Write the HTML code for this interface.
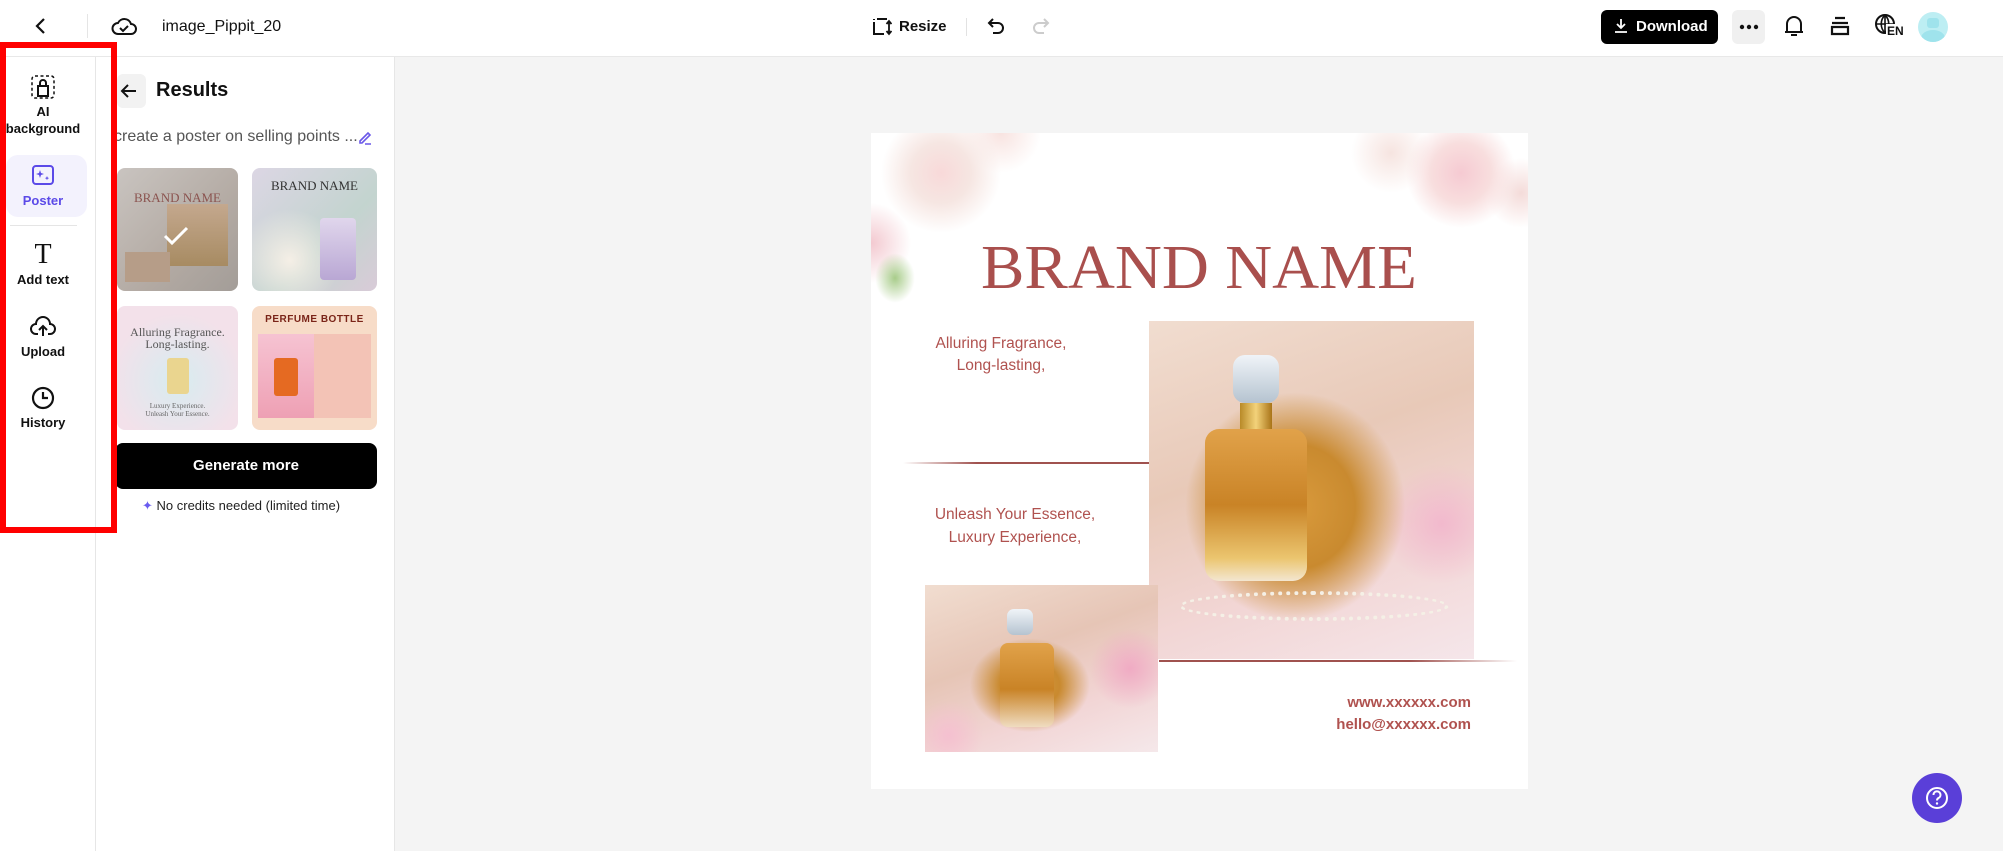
<!DOCTYPE html>
<html><head><meta charset="utf-8"><style>
*{box-sizing:border-box;margin:0;padding:0}
body{width:2003px;height:851px;overflow:hidden;background:#f4f4f4;font-family:"Liberation Sans",sans-serif;position:relative;color:#111}
.abs{position:absolute}
.top{left:0;top:0;width:2003px;height:57px;background:#fff;border-bottom:1px solid #e8e8e8}
.nav{left:0;top:57px;width:96px;height:794px;background:#fff;border-right:1px solid #e6e6e6}
.panel{left:96px;top:57px;width:299px;height:794px;background:#fff;border-right:1px solid #e6e6e6}
.lbl{font-size:13px;font-weight:bold;text-align:center;width:86px;left:0;line-height:17px}
.thumb{border-radius:8px;overflow:hidden}
.serif{font-family:"Liberation Serif",serif}
.pt{color:#b0524f;font-size:15.5px;font-family:"Liberation Sans",sans-serif;white-space:nowrap}
</style></head><body>
<div class="abs top"></div>
<svg class="abs" style="left:33px;top:17px" width="16" height="18" viewBox="0 0 16 18"><path d="M11 2 L4 9 L11 16" fill="none" stroke="#111" stroke-width="2.2"/></svg>
<div class="abs" style="left:87px;top:14px;width:1px;height:24px;background:#e5e5e5"></div>
<svg class="abs" style="left:111px;top:15px" width="26" height="22" viewBox="0 0 26 22"><path d="M7 19 H20 a5 5 0 0 0 0-10 a7 7 0 0 0-13-1 a5.5 5.5 0 0 0 0 11z" fill="none" stroke="#111" stroke-width="2"/><path d="M9 13 l3 3 l5-5" fill="none" stroke="#111" stroke-width="2"/></svg>
<div class="abs" style="left:162px;top:18px;font-size:16px">image_Pippit_20</div>
<svg class="abs" style="left:872px;top:17px" width="20" height="20" viewBox="0 0 20 20"><path d="M2 5v12h10M5 2h10M2 2v1M15 5" fill="none" stroke="#111" stroke-width="2"/><path d="M17 4v13M14.5 7l2.5-3 2.5 3M14.5 14l2.5 3 2.5-3" fill="none" stroke="#111" stroke-width="1.8"/></svg>
<div class="abs" style="left:899px;top:18px;font-size:15px;font-weight:bold">Resize</div>
<div class="abs" style="left:966px;top:18px;width:1px;height:18px;background:#e2e2e2"></div>
<svg class="abs" style="left:987px;top:17px" width="20" height="20" viewBox="0 0 20 20"><path d="M6 2 L2 6 L6 10 M2 6 H11 a5 5 0 0 1 0 10 H6" fill="none" stroke="#111" stroke-width="2"/></svg>
<svg class="abs" style="left:1030px;top:17px" width="20" height="20" viewBox="0 0 20 20"><path d="M14 2 L18 6 L14 10 M18 6 H9 a5 5 0 0 0 0 10 H14" fill="none" stroke="#ccc" stroke-width="2"/></svg>
<div class="abs" style="left:1601px;top:10px;width:117px;height:34px;background:#000;border-radius:6px;color:#fff;font-size:15px;font-weight:bold;line-height:34px;padding-left:35px">Download</div>
<svg class="abs" style="left:1614px;top:18px" width="14" height="16" viewBox="0 0 14 16"><path d="M7 1v9M3 6l4 4 4-4M1 14h12" fill="none" stroke="#fff" stroke-width="1.8"/></svg>
<div class="abs" style="left:1732px;top:10px;width:33px;height:34px;background:#f0f0f0;border-radius:6px"></div>
<svg class="abs" style="left:1738px;top:24px" width="22" height="6"><circle cx="4" cy="3" r="2.2" fill="#111"/><circle cx="11" cy="3" r="2.2" fill="#111"/><circle cx="18" cy="3" r="2.2" fill="#111"/></svg>
<svg class="abs" style="left:1783px;top:14px" width="22" height="24" viewBox="0 0 22 24"><path d="M4 18V10a7 7 0 0 1 14 0v8zM2 18h18M8 21h6" fill="none" stroke="#111" stroke-width="2"/></svg>
<svg class="abs" style="left:1829px;top:15px" width="22" height="22" viewBox="0 0 22 22"><path d="M6 3h10M3 8h16M3 12h16v7H3z" fill="none" stroke="#111" stroke-width="2.2"/></svg>
<svg class="abs" style="left:1874px;top:13px" width="26" height="26" viewBox="0 0 26 26"><circle cx="11" cy="11" r="9" fill="none" stroke="#111" stroke-width="2"/><path d="M2 11h18M11 2v18M11 2c-5 5-5 13 0 18M11 2c5 5 5 13 0 18" fill="none" stroke="#111" stroke-width="1.6"/></svg>
<div class="abs" style="left:1886px;top:24px;font-size:12px;font-weight:bold;background:#fff;padding:0 1px">EN</div>
<div class="abs" style="left:1918px;top:12px;width:30px;height:30px;border-radius:50%;background:#bdeef3;overflow:hidden"><div class="abs" style="left:9px;top:6px;width:12px;height:10px;background:#9fe3ec;border-radius:3px"></div><div class="abs" style="left:3px;top:18px;width:24px;height:16px;background:#9fe3ec;border-radius:50%"></div></div>

<div class="abs nav"></div>
<svg class="abs" style="left:31px;top:75px" width="24" height="24" viewBox="0 0 24 24"><rect x="1" y="1" width="22" height="22" rx="3" fill="none" stroke="#111" stroke-width="1.5" stroke-dasharray="3 2.5"/><path d="M7 21V11h10v10zM9 11V8a3 3 0 0 1 6 0v3" fill="none" stroke="#111" stroke-width="2"/></svg>
<div class="abs lbl" style="top:103px">AI<br>background</div>
<div class="abs" style="left:6px;top:155px;width:81px;height:62px;background:#f3f2fd;border-radius:12px"></div>
<svg class="abs" style="left:31px;top:164px" width="24" height="22" viewBox="0 0 24 22"><rect x="2" y="2" width="20" height="18" rx="3" fill="none" stroke="#5b4ae8" stroke-width="2"/><path d="M9 6l1 3 3 1-3 1-1 3-1-3-3-1 3-1zM16 12l.6 1.5 1.5.6-1.5.6-.6 1.5-.6-1.5-1.5-.6 1.5-.6z" fill="#5b4ae8"/></svg>
<div class="abs lbl" style="top:192px;color:#5b4ae8">Poster</div>
<div class="abs" style="left:10px;top:225px;width:67px;height:1px;background:#e5e5e5"></div>
<div class="abs serif" style="left:0;width:86px;top:239px;text-align:center;font-size:28px;line-height:32px">T</div>
<div class="abs lbl" style="top:271px">Add text</div>
<svg class="abs" style="left:30px;top:316px" width="26" height="22" viewBox="0 0 26 22"><path d="M8 18H6a5 5 0 0 1 0-10 a7 7 0 0 1 14 0 a5 5 0 0 1 0 10h-2M13 20v-9M9 14l4-4 4 4" fill="none" stroke="#111" stroke-width="2"/></svg>
<div class="abs lbl" style="top:343px">Upload</div>
<svg class="abs" style="left:31px;top:386px" width="24" height="24" viewBox="0 0 24 24"><circle cx="12" cy="12" r="10" fill="none" stroke="#111" stroke-width="2.2"/><path d="M12 6v6h5" fill="none" stroke="#111" stroke-width="2.2"/></svg>
<div class="abs lbl" style="top:414px">History</div>

<div class="abs panel"></div>
<div class="abs" style="left:117px;top:74px;width:29px;height:34px;background:#f2f2f2;border-radius:6px"></div>
<svg class="abs" style="left:120px;top:83px" width="18" height="16" viewBox="0 0 18 16"><path d="M8 2L2 8l6 6M2 8h14" fill="none" stroke="#111" stroke-width="2"/></svg>
<div class="abs" style="left:156px;top:79px;font-size:20px;font-weight:bold">Results</div>
<div class="abs" style="left:114px;top:128px;font-size:16px;color:#555;white-space:nowrap">create a poster on selling points ...</div>
<svg class="abs" style="left:357px;top:130px" width="16" height="16" viewBox="0 0 16 16"><path d="M3 11l8-8 2 2-8 8H3zM8 14h6" fill="none" stroke="#6a58e8" stroke-width="1.6"/></svg>
<div class="abs thumb" style="left:117px;top:168px;width:121px;height:123px;background:linear-gradient(135deg,#c9c4c0,#b3aaa3 60%,#a39d98)">
 <div class="abs serif" style="left:0;width:121px;top:22px;text-align:center;color:#8b5450;font-size:13px">BRAND NAME</div>
 <div class="abs" style="left:50px;top:36px;width:61px;height:62px;background:linear-gradient(#c4a88e,#a78b62)"></div>
 <div class="abs" style="left:8px;top:84px;width:45px;height:30px;background:#b69d88"></div>
 <svg class="abs" style="left:45px;top:58px" width="28" height="20"><path d="M3 10l7 7 15-15" fill="none" stroke="#fff" stroke-width="3"/></svg>
</div>
<div class="abs thumb" style="left:252px;top:168px;width:125px;height:123px;background:radial-gradient(circle at 30% 75%,#f5efe6,transparent 40%),linear-gradient(135deg,#dcd6e4,#c3d4cf 60%,#d9cbd8)">
 <div class="abs serif" style="left:0;width:125px;top:10px;text-align:center;color:#333;font-size:13px">BRAND NAME</div>
 <div class="abs" style="left:68px;top:50px;width:36px;height:62px;border-radius:4px;background:linear-gradient(#e0d6ec,#b9a7d4)"></div>
</div>
<div class="abs thumb" style="left:117px;top:306px;width:121px;height:124px;background:radial-gradient(circle at 50% 60%,#d7ecf0,#f3e1ea 70%)">
 <div class="abs serif" style="left:0;width:121px;top:20px;text-align:center;color:#555;font-size:12px;line-height:12px">Alluring Fragrance.<br>Long-lasting.</div>
 <div class="abs" style="left:50px;top:52px;width:22px;height:36px;background:#ead58f;border-radius:3px"></div>
 <div class="abs serif" style="left:0;width:121px;top:96px;text-align:center;color:#666;font-size:7px">Luxury Experience.<br>Unleash Your Essence.</div>
</div>
<div class="abs thumb" style="left:252px;top:306px;width:125px;height:124px;background:#f7dcc8">
 <div class="abs" style="left:0;width:125px;top:8px;text-align:center;color:#7a2418;font-size:10px;font-weight:bold;letter-spacing:0.5px">PERFUME BOTTLE</div>
 <div class="abs" style="left:6px;top:28px;width:56px;height:84px;background:linear-gradient(#f6c3d2,#eea0b4)"><div class="abs" style="left:16px;top:24px;width:24px;height:38px;background:#e56a22;border-radius:3px"></div></div>
 <div class="abs" style="left:62px;top:28px;width:57px;height:84px;background:#f3c3b6"></div>
</div>
<div class="abs" style="left:115px;top:443px;width:262px;height:46px;background:#000;border-radius:8px;color:#fff;font-size:15px;font-weight:bold;text-align:center;line-height:46px">Generate more</div>
<div class="abs" style="left:142px;top:498px;font-size:13px;color:#222"><span style="color:#6a5cf0">✦</span> No credits needed (limited time)</div>

<div class="abs" style="left:871px;top:133px;width:657px;height:656px;background:#fff;overflow:hidden">
 <div class="abs" style="left:-20px;top:-20px;width:210px;height:190px;background:radial-gradient(circle at 90px 60px,#f8d9d9 0,#f6e6e2 30px,transparent 60px),radial-gradient(circle at 20px 130px,#f3c9d0 0,transparent 40px),radial-gradient(circle at 150px 20px,#f8e3e0,transparent 40px)"></div>
 <div class="abs" style="left:440px;top:-20px;width:240px;height:150px;background:radial-gradient(circle at 150px 60px,#f6cad2 0,#f8dede 30px,transparent 55px),radial-gradient(circle at 80px 40px,#f6e4e0 0,transparent 40px),radial-gradient(circle at 210px 80px,#f4dbd9,transparent 35px)"></div>
 <div class="abs" style="left:4px;top:120px;width:40px;height:50px;background:radial-gradient(#a8cc8a,transparent 70%)"></div>
 <div class="abs serif" style="left:110px;top:100px;font-size:62px;color:#a94f4d;white-space:nowrap;transform:scaleX(1.05);transform-origin:left">BRAND NAME</div>
 <div class="abs pt" style="left:40px;top:200px;width:180px;text-align:center;line-height:22px">Alluring Fragrance,<br>Long-lasting,</div>
 <div class="abs" style="left:32px;top:329px;width:246px;height:2px;background:linear-gradient(90deg,#fff,#a0524f 30%)"></div>
 <div class="abs pt" style="left:44px;top:370px;width:200px;text-align:center;line-height:23px">Unleash Your Essence,<br>Luxury Experience,</div>
 <div class="abs" style="left:278px;top:188px;width:325px;height:338px;background:radial-gradient(ellipse at 45% 55%,#d99a3c 0,#c98a2f 60px,transparent 110px),radial-gradient(circle at 90% 60%,#f2b9cd,transparent 60px),linear-gradient(160deg,#f1ddd0,#e8c9b8 40%,#f2d6d5 70%,#f5e6ea)">
  <div class="abs" style="left:84px;top:34px;width:46px;height:48px;border-radius:12px;background:linear-gradient(#f0f4f8,#b5c3d0)"></div>
  <div class="abs" style="left:91px;top:82px;width:32px;height:26px;background:linear-gradient(90deg,#b88a28,#f3d27a,#a97418)"></div>
  <div class="abs" style="left:56px;top:108px;width:102px;height:152px;border-radius:14px;background:linear-gradient(#e1a24a,#c98326 50%,#ebc56f 85%,#f3e6d0)"></div>
  <div class="abs" style="left:30px;top:270px;width:270px;height:30px;border-radius:50%;border:4px dotted #f5f0e6"></div>
 </div>
 <div class="abs" style="left:288px;top:527px;width:358px;height:2px;background:linear-gradient(90deg,#a0524f 70%,#fff)"></div>
 <div class="abs" style="left:54px;top:452px;width:233px;height:167px;background:radial-gradient(ellipse at 45% 60%,#d7983e 0,#c98a2f 30px,transparent 60px),radial-gradient(circle at 88% 50%,#f0abc4,transparent 40px),radial-gradient(circle at 10% 90%,#f5c0d0,transparent 35px),linear-gradient(160deg,#f1ddd0,#e6c5b6 40%,#f2d5d5 70%,#f5e8ea)">
  <div class="abs" style="left:82px;top:24px;width:26px;height:26px;border-radius:7px;background:linear-gradient(#f0f4f8,#b5c3d0)"></div>
  <div class="abs" style="left:75px;top:58px;width:54px;height:84px;border-radius:8px;background:linear-gradient(#e1a24a,#c98326 55%,#efdcc0)"></div>
 </div>
 <div class="abs pt" style="left:380px;top:559px;width:220px;text-align:right;line-height:22px;font-size:15px;font-weight:bold">www.xxxxxx.com<br>hello@xxxxxx.com</div>
</div>

<div class="abs" style="left:1912px;top:773px;width:50px;height:50px;border-radius:50%;background:#5a3fd8"></div>
<svg class="abs" style="left:1924px;top:785px" width="26" height="26" viewBox="0 0 26 26"><circle cx="13" cy="13" r="10" fill="none" stroke="#fff" stroke-width="2"/><path d="M9.5 10a3.5 3.5 0 1 1 5 3c-1 .6-1.5 1.2-1.5 2.5" fill="none" stroke="#fff" stroke-width="2"/><circle cx="13" cy="18.5" r="1.2" fill="#fff"/></svg>

<div class="abs" style="left:0;top:42px;width:117px;height:491px;border:6px solid #f00;z-index:10"></div>
</body></html>
